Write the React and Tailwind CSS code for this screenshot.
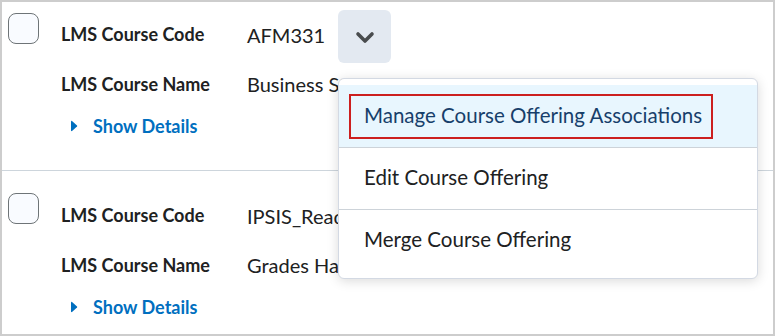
import { useState } from "react";

// One course row: checkbox + label/value lines + "Show Details"
function CourseRow({ code, name, showButton, topPad, boxPad }) {
  return (
    <div className={`flex ${topPad}`}>
      <div className={`w-[59px] shrink-0 pl-[6px] ${boxPad}`}>
        <div className="w-[31px] h-[31px] rounded-[8px] border-[1.5px] border-[#6e7477] bg-[#f9fbff]" />
      </div>
      <div className="flex flex-col">
        <div className="flex items-center h-[53px]">
          <span className="relative -top-[2px] w-[186px] text-[18px] font-bold text-[#202122]">LMS Course Code</span>
          <span className="relative -top-[2px] text-[20px] text-[#202122]">{code}</span>
          {showButton && (
            <button className="ml-[13px] w-[53px] h-[53px] rounded-[6px] bg-[#e3e9f1] flex items-center justify-center">
              <svg width="20" height="14" viewBox="0 0 20 14" fill="none" aria-hidden="true">
                <path
                  d="M3 4l7 7 7-7"
                  stroke="#494c4e"
                  strokeWidth="3.6"
                  strokeLinecap="round"
                  strokeLinejoin="round"
                />
              </svg>
            </button>
          )}
        </div>
        <div className="flex items-center h-[42px]">
          <span className="w-[186px] text-[18px] font-bold text-[#202122]">LMS Course Name</span>
          <span className="text-[20px] text-[#202122] whitespace-nowrap">{name}</span>
        </div>
        <div className="flex items-center h-[42px] pl-[9px]">
          <svg width="8" height="12" viewBox="0 0 8 12" aria-hidden="true">
            <path d="M1 1.5v9c0 .6.6.9 1 .6l5-4.5c.3-.3.3-.9 0-1.2L2 .9c-.4-.3-1 0-1 .6z" fill="#006fbf" />
          </svg>
          <span className="ml-[15px] text-[18px] font-bold text-[#006fbf]">Show Details</span>
        </div>
      </div>
    </div>
  );
}

export default function App() {
  const [active] = useState(0);
  const items = [
    "Manage Course Offering Associations",
    "Edit Course Offering",
    "Merge Course Offering",
  ];

  return (
    <div
      className="relative w-[775px] h-[336px] overflow-hidden bg-white border-2 border-[#cdcdcd]"
      style={{ fontFamily: "Lato, 'Noto Sans', sans-serif" }}
    >
      <div className="h-[169px] border-b border-[#cdd5dc]">
        <CourseRow code="AFM331" name="Business Strategy" showButton topPad="pt-[8px]" boxPad="pt-[3px]" />
      </div>
      <CourseRow code="IPSIS_Ready" name="Grades Handling" topPad="pt-[20px]" boxPad="pt-[2px]" />

      {/* dropdown menu */}
      <div className="absolute left-[336px] top-[76px] w-[420px] rounded-[6px] border border-[#d3d9e3] bg-white pt-[6px] pb-[7px] shadow-[0_2px_12px_rgba(0,0,0,0.15)]">
        {items.map((label, i) => (
          <div
            key={label}
            className={`relative h-[62px] flex items-center pl-[25px] text-[20.5px] ${
              i > 0 ? "border-t border-[#cdd3d9]" : ""
            } ${i === active ? "bg-[#e8f6fe] text-[#173f6b]" : "text-[#202122]"}`}
          >
            <span className="relative -top-[1px]">{label}</span>
            {i === active && (
              <div className="absolute left-[10px] top-[9px] w-[364px] h-[45px] border-2 border-[#cc1f1f]" />
            )}
          </div>
        ))}
      </div>
    </div>
  );
}
